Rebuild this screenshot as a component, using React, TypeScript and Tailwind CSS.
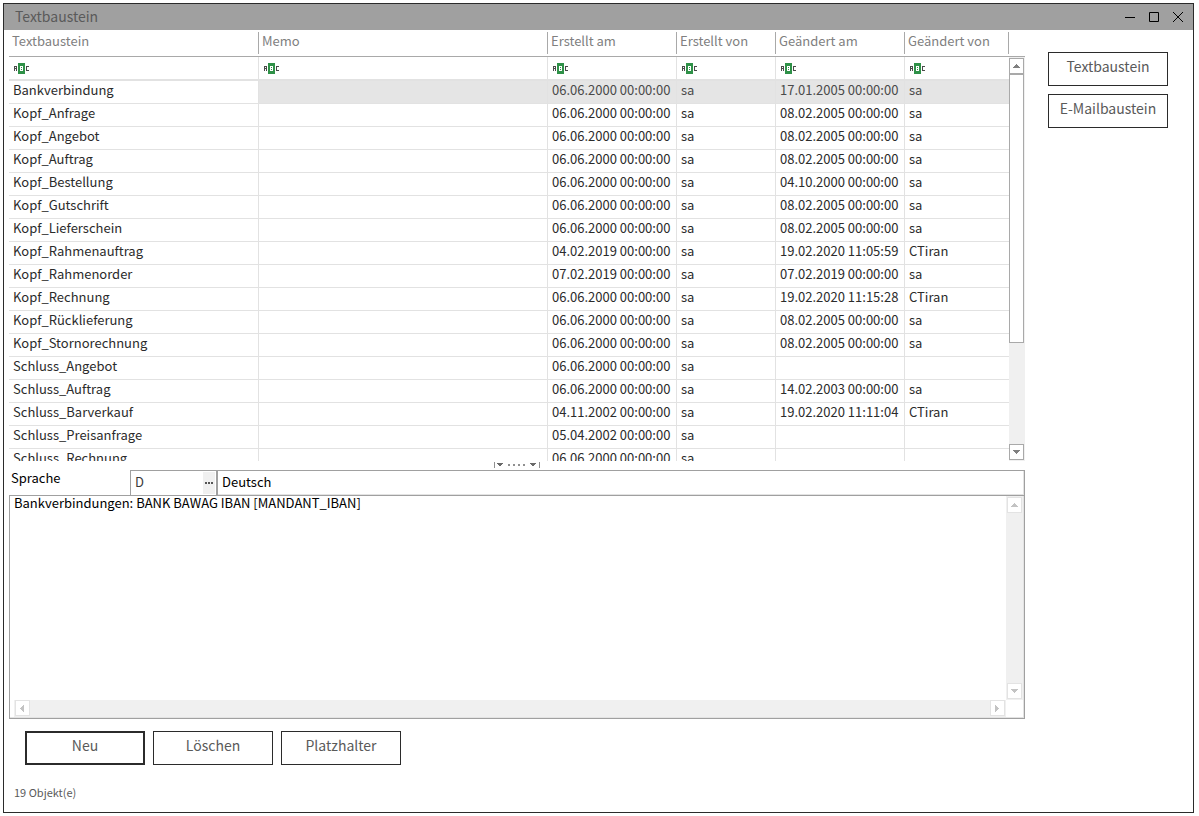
import { ReactNode } from 'react';

const columns = ['Textbaustein', 'Memo', 'Erstellt am', 'Erstellt von', 'Geändert am', 'Geändert von'];

const rows = [
  ['Bankverbindung', '', '06.06.2000 00:00:00', 'sa', '17.01.2005 00:00:00', 'sa'],
  ['Kopf_Anfrage', '', '06.06.2000 00:00:00', 'sa', '08.02.2005 00:00:00', 'sa'],
  ['Kopf_Angebot', '', '06.06.2000 00:00:00', 'sa', '08.02.2005 00:00:00', 'sa'],
  ['Kopf_Auftrag', '', '06.06.2000 00:00:00', 'sa', '08.02.2005 00:00:00', 'sa'],
  ['Kopf_Bestellung', '', '06.06.2000 00:00:00', 'sa', '04.10.2000 00:00:00', 'sa'],
  ['Kopf_Gutschrift', '', '06.06.2000 00:00:00', 'sa', '08.02.2005 00:00:00', 'sa'],
  ['Kopf_Lieferschein', '', '06.06.2000 00:00:00', 'sa', '08.02.2005 00:00:00', 'sa'],
  ['Kopf_Rahmenauftrag', '', '04.02.2019 00:00:00', 'sa', '19.02.2020 11:05:59', 'CTiran'],
  ['Kopf_Rahmenorder', '', '07.02.2019 00:00:00', 'sa', '07.02.2019 00:00:00', 'sa'],
  ['Kopf_Rechnung', '', '06.06.2000 00:00:00', 'sa', '19.02.2020 11:15:28', 'CTiran'],
  ['Kopf_Rücklieferung', '', '06.06.2000 00:00:00', 'sa', '08.02.2005 00:00:00', 'sa'],
  ['Kopf_Stornorechnung', '', '06.06.2000 00:00:00', 'sa', '08.02.2005 00:00:00', 'sa'],
  ['Schluss_Angebot', '', '06.06.2000 00:00:00', 'sa', '', ''],
  ['Schluss_Auftrag', '', '06.06.2000 00:00:00', 'sa', '14.02.2003 00:00:00', 'sa'],
  ['Schluss_Barverkauf', '', '04.11.2002 00:00:00', 'sa', '19.02.2020 11:11:04', 'CTiran'],
  ['Schluss_Preisanfrage', '', '05.04.2002 00:00:00', 'sa', '', ''],
  ['Schluss_Rechnung', '', '06.06.2000 00:00:00', 'sa', '', ''],
];

function AbcIcon() {
  return (
    <svg width="16" height="11" viewBox="0 0 16 11" shapeRendering="crispEdges" aria-hidden="true">
      <path d="M0 3h3v5H2V6H1v2H0zM1 4v1h1V4z" fill="#4a4a4a" fillRule="evenodd" />
      <path d="M4 0h7v11H4z" fill="#2f9148" />
      <path d="M6 3h3v5H6z" fill="#fff" />
      <path d="M7 4h1v1H7zM7 6h1v1H7z" fill="#2f9148" />
      <path d="M12 3h3v1h-3zM12 4h1v3h-1zM12 7h3v1h-3z" fill="#4a4a4a" />
    </svg>
  );
}

const arrows = {
  up: 'M3 0h1v1h1v1h1v1h1v1H0V3h1V2h1V1h1z',
  down: 'M0 0h7v1H6v1H5v1H4v1H3V3H2V2H1V1H0z',
  left: 'M4 0v7H3V6H2V5H1V4H0V3h1V2h1V1h1V0z',
  right: 'M0 0v7h1V6h1V5h1V4h1V3H3V2H2V1H1V0z',
};

function Arrow({ dir }: { dir: keyof typeof arrows }) {
  return (
    <svg width="7" height="7" viewBox={dir === 'up' || dir === 'down' ? '0 -1 7 7' : '-1 0 7 7'} fill="currentColor" aria-hidden="true">
      <path d={arrows[dir]} />
    </svg>
  );
}

function ScrollButton({ dir, label, light }: { dir: keyof typeof arrows; label: string; light?: boolean }) {
  return (
    <button
      aria-label={label}
      className={`flex h-4 w-[15px] shrink-0 items-center justify-center border bg-white ${
        light ? 'border-[#e3e3e3] text-[#c3c3c3]' : 'border-[#a9a9a9] text-[#808080]'
      }`}
    >
      <Arrow dir={dir} />
    </button>
  );
}

function ActionButton({ children, primary }: { children: ReactNode; primary?: boolean }) {
  return (
    <button
      className={`h-[34px] w-[120px] border-[#2b2b2b] bg-white pb-1.5 text-sm leading-5 text-[#5a5a5a] ${
        primary ? 'border-2' : 'border'
      }`}
    >
      {children}
    </button>
  );
}

function TitleBar() {
  return (
    <header className="flex h-[26px] items-center justify-between bg-[#a0a0a0] pl-[11px] pr-[7px] text-[#5a5a5a]">
      <h1 className="pb-0.5 text-sm leading-5">Textbaustein</h1>
      <div className="flex gap-2 text-black">
        <button aria-label="Minimieren" className="flex size-4 items-center justify-center">
          <svg width="12" height="12" viewBox="0 0 12 12" shapeRendering="crispEdges"><path d="M1 6h10v1H1z" /></svg>
        </button>
        <button aria-label="Maximieren" className="flex size-4 items-center justify-center">
          <svg width="12" height="12" viewBox="0 0 12 12" fill="none" stroke="currentColor"><path d="M1.5 1.5h9v9h-9z" /></svg>
        </button>
        <button aria-label="Schließen" className="flex size-4 items-center justify-center">
          <svg width="12" height="12" viewBox="0 0 12 12" fill="none" stroke="currentColor"><path d="M1 1l10 10M11 1L1 11" /></svg>
        </button>
      </div>
    </header>
  );
}

function SnippetTable() {
  return (
    <div className="flex h-[431px] overflow-hidden">
      <div className="min-w-0 flex-1">
        <table className="w-full table-fixed border-separate border-spacing-0 text-left text-[13px]">
          <colgroup>
            <col className="w-[250px]" />
            <col />
            <col className="w-[129px]" />
            <col className="w-[99px]" />
            <col className="w-[129px]" />
            <col className="w-[104px]" />
          </colgroup>
          <thead>
            <tr className="h-[27px]">
              {columns.map((name) => (
                <th key={name} className="border-b border-[#a9a9a9] p-0 font-normal">
                  <div className="h-[22px] border-r border-[#a9a9a9] pl-[3px] leading-[18px] text-[#808080]">{name}</div>
                </th>
              ))}
            </tr>
            <tr className="h-6">
              {columns.map((name) => (
                <td key={name} className="border-b-2 border-r border-[#e2e2e2] p-0 pl-[5px] last:border-r-0">
                  <button aria-label={`${name} filtern`} className="block">
                    <AbcIcon />
                  </button>
                </td>
              ))}
            </tr>
          </thead>
          <tbody>
            {rows.map((row, i) => (
              <tr key={row[0]} className="h-[23px]">
                {row.map((cell, j) => (
                  <td
                    key={j}
                    className={`whitespace-nowrap border-b border-r border-[#e2e2e2] p-0 pl-1 align-top leading-[18px] last:border-r-0 ${
                      i === 0 && j > 0 ? 'bg-[#e5e5e5] text-[#4a4a4a]' : 'text-[#2b2b2b]'
                    }`}
                  >
                    {cell}
                  </td>
                ))}
              </tr>
            ))}
          </tbody>
        </table>
      </div>
      <div className="flex w-4 flex-col pt-[26px]">
        <div className="flex flex-1 flex-col border-t border-[#a9a9a9] bg-[#f0f0f0] py-px">
          <ScrollButton dir="up" label="Nach oben" />
          <div className="h-[269px] w-[15px] border border-[#a9a9a9] bg-white"></div>
          <div className="flex-1"></div>
          <ScrollButton dir="down" label="Nach unten" />
        </div>
      </div>
    </div>
  );
}

function Splitter() {
  return (
    <div className="flex h-[9px] items-start justify-center text-[#6a6a6a]">
      <svg width="46" height="7" viewBox="0 0 46 7" fill="currentColor" shapeRendering="crispEdges">
        <path d="M0 1h1v6H0zM45 1h1v6h-1z" fill="#909090" />
        <path d="M3 2h6v1H8v1H7v1H5V4H4V3H3zM36 2h6v1h-1v1h-1v1h-2V4h-1V3h-1z" />
        <path d="M14 3h2v2h-2zM19 3h2v2h-2zM24 3h2v2h-2zM29 3h2v2h-2z" fill="#909090" />
      </svg>
    </div>
  );
}

function Editor() {
  return (
    <div className="flex flex-1 flex-col text-[13px]">
      <div className="flex h-[25px] text-black">
        <label htmlFor="sprache" className="w-[121px] pl-[2px] leading-4">Sprache</label>
        <div className="flex w-[87px] border border-b-0 border-[#a0a0a0] p-px">
          <input id="sprache" defaultValue="D" className="min-w-0 flex-1 pb-[3px] pl-[3px] text-[#3a3a3a] outline-none" />
          <button aria-label="Sprache wählen" className="flex w-3 items-center justify-center bg-[#f0f0f0]">
            <svg width="8" height="2" viewBox="0 0 8 2" fill="#555"><path d="M0 0h2v2H0zM3 0h2v2H3zM6 0h2v2H6z" /></svg>
          </button>
        </div>
        <input
          aria-label="Bezeichnung"
          defaultValue="Deutsch"
          className="min-w-0 flex-1 border border-b-0 border-[#a0a0a0] pb-[3px] pl-1 shadow-[inset_-1px_-1px_#e3e3e3] outline-none"
        />
      </div>
      <div className="flex flex-1 flex-col border border-[#a0a0a0] pb-px pr-px shadow-[inset_-1px_-1px_#e3e3e3]">
        <div className="flex flex-1">
          <textarea
            aria-label="Text"
            defaultValue="Bankverbindungen: BANK BAWAG IBAN [MANDANT_IBAN]"
            className="min-w-0 flex-1 resize-none overflow-hidden pl-1 leading-[14px] text-black outline-none"
          />
          <div className="flex w-[17px] flex-col justify-between bg-[#f0f0f0] p-px">
            <ScrollButton dir="up" label="Text nach oben" light />
            <ScrollButton dir="down" label="Text nach unten" light />
          </div>
        </div>
        <div className="flex h-[17px] pl-1 pr-[17px]">
          <div className="flex flex-1 justify-between bg-[#f0f0f0] px-px">
            <ScrollButton dir="left" label="Text nach links" light />
            <ScrollButton dir="right" label="Text nach rechts" light />
          </div>
        </div>
      </div>
    </div>
  );
}

export default function App() {
  return (
    <div className="flex min-h-screen flex-col bg-white py-[3px] pl-[3px] pr-[5px] font-['Noto_Sans_CJK_SC',sans-serif]">
      <div className="flex flex-1 flex-col border border-[#2b2b2b]">
        <TitleBar />
        <div className="flex flex-1 gap-[23px] pl-[5px] pr-[25px]">
          <main className="flex min-w-0 flex-1 flex-col">
            <SnippetTable />
            <Splitter />
            <Editor />
          </main>
          <aside className="flex flex-col gap-2 pt-[22px]">
            <ActionButton>Textbaustein</ActionButton>
            <ActionButton>E-Mailbaustein</ActionButton>
          </aside>
        </div>
        <div className="flex gap-2 pl-[21px] pt-3">
          <ActionButton primary>Neu</ActionButton>
          <ActionButton>Löschen</ActionButton>
          <ActionButton>Platzhalter</ActionButton>
        </div>
        <footer className="px-[10px] pb-3 pt-[19px] text-[11px] leading-4 text-[#5a5a5a]">19 Objekt(e)</footer>
      </div>
    </div>
  );
}
